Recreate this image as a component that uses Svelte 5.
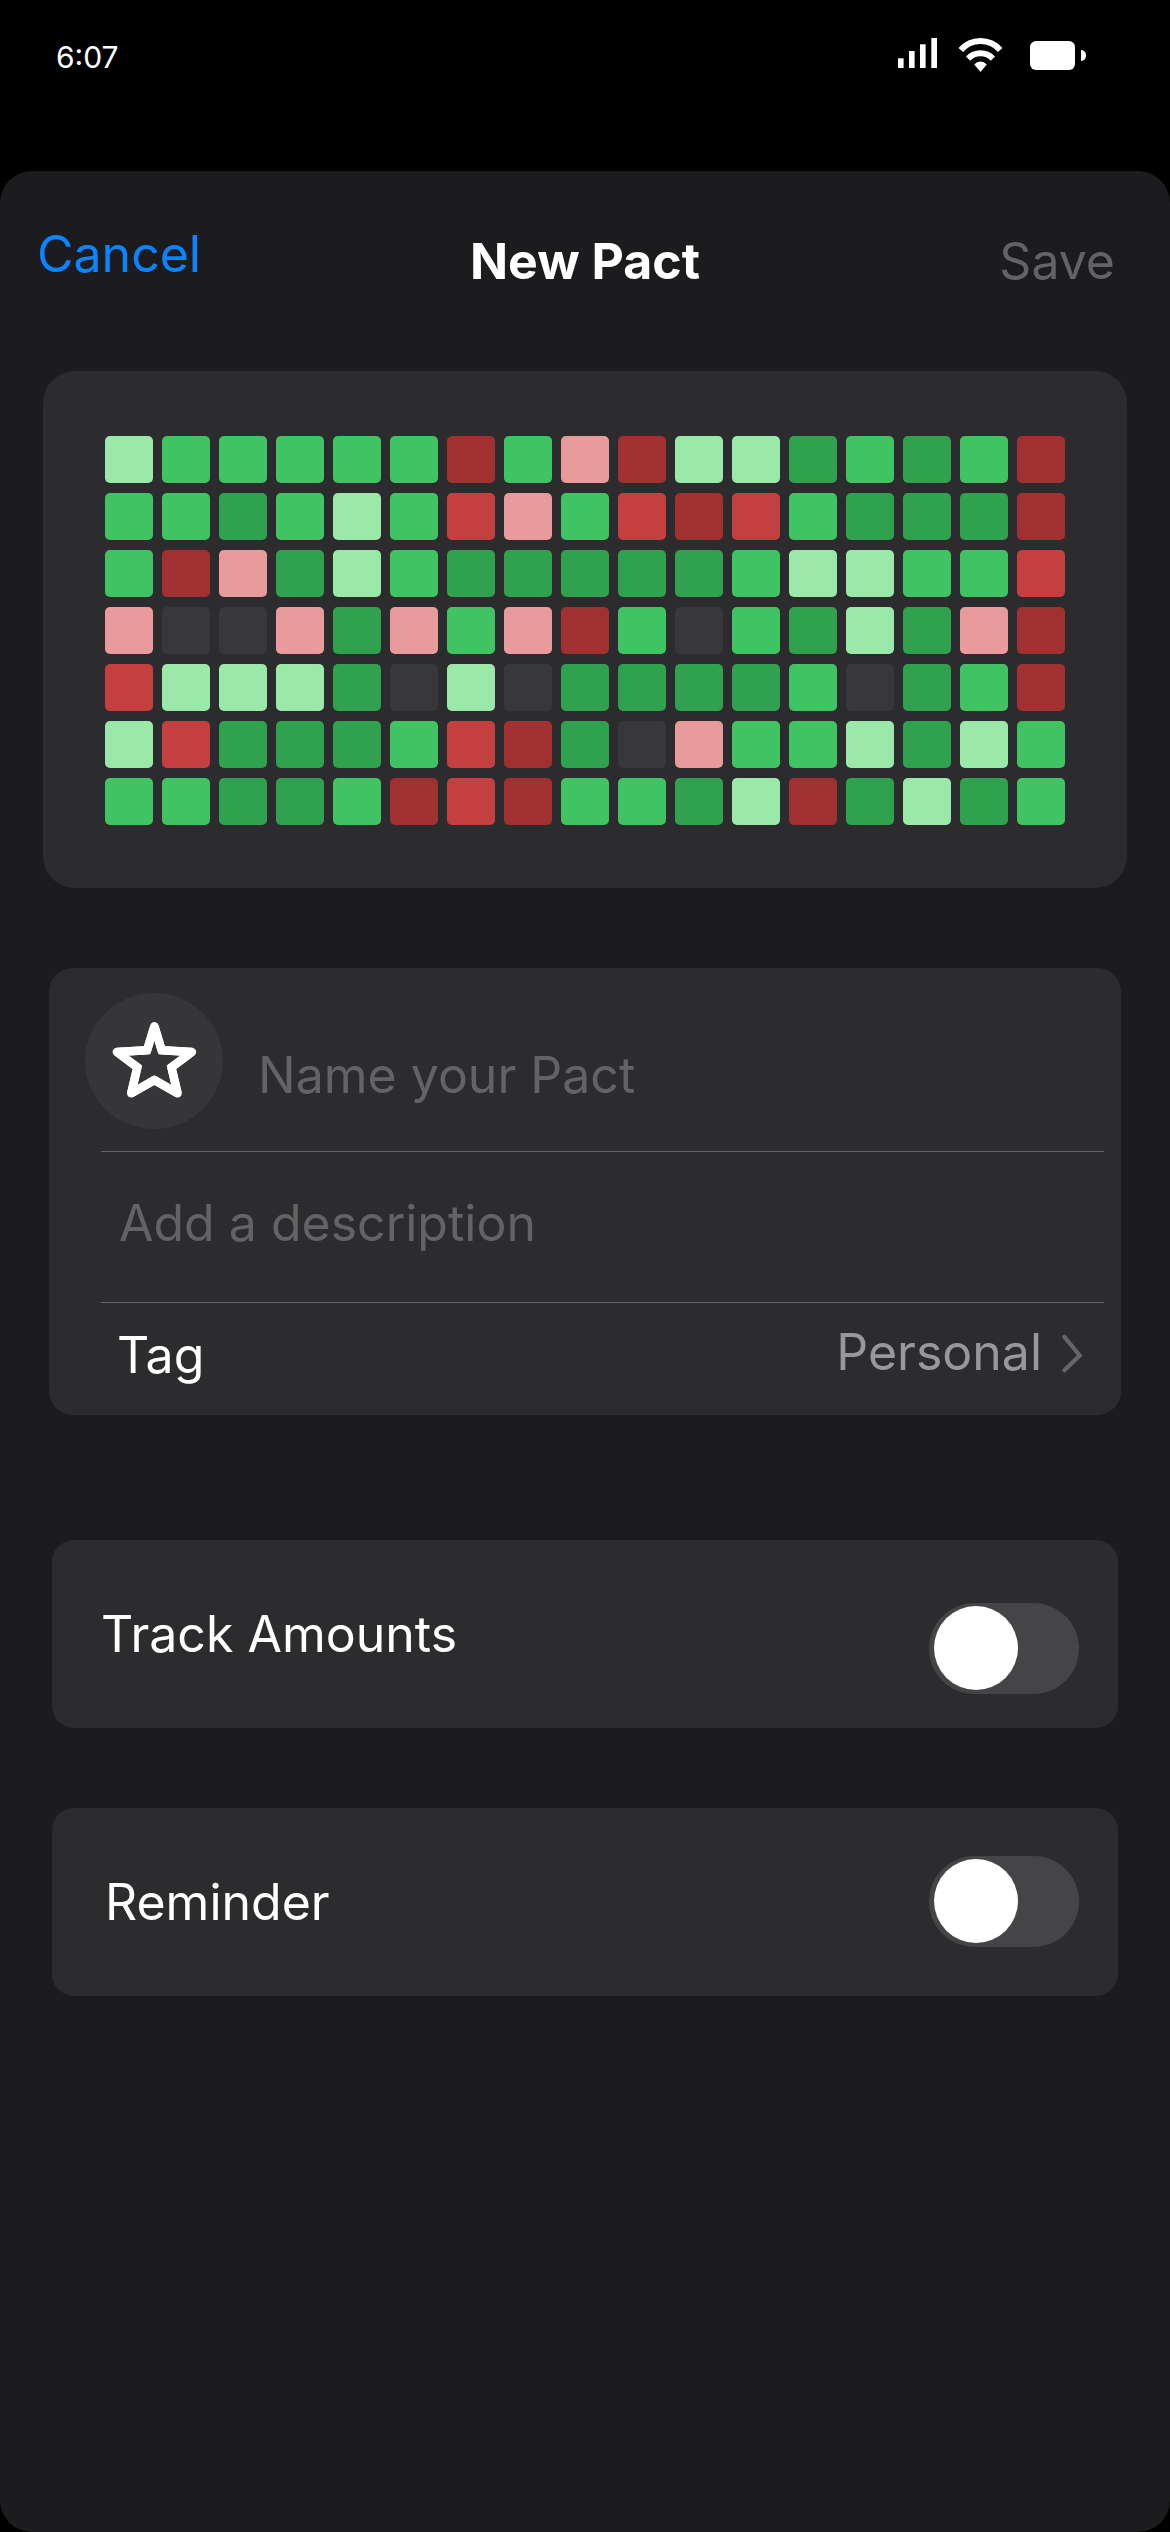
<script>
  // One character per day: a/b/c = light to dark green, p/r/d = pink, red, dark red, x = empty
  const rows = [
    'abbbbbdbpdaacbcbd',
    'bbcbabrpbrdrbcccd',
    'bdpcabcccccbaabbr',
    'pxxpcpbpdbxbcacpd',
    'raaacxaxccccbxcbd',
    'arcccbrdcxpbbacab',
    'bbccbdrdbbcadcacb'
  ];
  const cells = rows.join('').split('');

  const star =
    'M43.4 5.2L50.7 29.2L81 31L60.4 46.3L66.6 72.3L43.4 59L20.2 72.3L26.4 46.3L5.8 31L36.1 29.2Z';
</script>

<div class="screen">
  <div class="status">
    <span class="time">6:07</span>
    <svg class="signal" width="39" height="30" viewBox="0 0 39 30" fill="#fff">
      <rect x="0" y="20.3" width="5.6" height="9.7" />
      <rect x="11" y="13" width="5.6" height="17" />
      <rect x="22" y="6.3" width="5.6" height="23.7" />
      <rect x="33.3" y="0" width="5.7" height="30" />
    </svg>
    <svg class="wifi" width="46" height="36" viewBox="0 0 46 36" fill="none" stroke="#fff" stroke-width="6">
      <path d="M2.8 13A26 26 0 0 1 42.2 13" />
      <path d="M10.1 21.6A17 17 0 0 1 34.9 21.6" />
      <path d="M16.2 27.4A8.5 8.5 0 0 1 28.8 27.4L22.5 35Z" fill="#fff" stroke="none" />
    </svg>
    <div class="battery"></div>
    <div class="battery-tip"></div>
  </div>

  <main class="sheet">
    <header>
      <span class="cancel">Cancel</span>
      <h1>New Pact</h1>
      <span class="save">Save</span>
    </header>

    <section class="history">
      {#each cells as c}
        <i class="cell {c}"></i>
      {/each}
    </section>

    <section class="details">
      <div class="name-row">
        <div class="badge">
          <!-- Two passes: mitred inner corners, then rounded tips -->
          <svg width="86" height="80" viewBox="0 0 86 80" fill="none" stroke="#fff" stroke-width="8.4">
            <path d={star} stroke-linejoin="miter" stroke-miterlimit="1.5" />
            <path d={star} stroke-linejoin="round" />
          </svg>
        </div>
        <span class="hint name">Name your Pact</span>
      </div>
      <div class="desc-row"><span class="hint desc">Add a description</span></div>
      <div class="tag-row">
        <span class="tag">Tag</span>
        <span class="value">Personal</span>
        <svg class="chevron" width="22" height="40" viewBox="0 0 22 40" fill="none" stroke="#666668" stroke-width="4.2" stroke-linecap="round">
          <path d="M2.4 2.8L17.7 21.5L2.4 36.2" />
        </svg>
      </div>
    </section>

    <section class="option track">
      <span class="label">Track Amounts</span>
      <div class="toggle"><div class="knob"></div></div>
    </section>

    <section class="option reminder">
      <span class="label">Reminder</span>
      <div class="toggle"><div class="knob"></div></div>
    </section>
  </main>
</div>

<style>
  :global(body) {
    margin: 0;
    background: #000;
  }
  .screen {
    width: 1170px;
    height: 2532px;
    overflow: hidden;
    display: flex;
    flex-direction: column;
    background: #000;
    color: #fff;
    font-family: Inter, 'Liberation Sans', sans-serif;
    font-size: 50px;
    line-height: 60px;
    white-space: nowrap;
  }
  .status {
    height: 171px;
    flex: none;
    display: flex;
    align-items: flex-start;
    padding-left: 56px;
    box-sizing: border-box;
  }
  .time {
    font-size: 30px;
    line-height: 40px;
    margin-top: 37px;
    width: 842px;
  }
  .signal { margin-top: 38px; }
  .wifi { margin: 37px 0 0 21px; }
  .battery {
    width: 45px;
    height: 29px;
    margin: 41px 0 0 26px;
    border-radius: 6px;
    background: #fff;
  }
  .battery-tip {
    width: 5px;
    height: 11px;
    margin: 50px 0 0 6px;
    border-radius: 0 5px 5px 0;
    background: #fff;
  }
  .sheet {
    flex: 1;
    display: flex;
    flex-direction: column;
    background: #1c1c1e;
    border-radius: 32px;
  }
  header {
    height: 200px;
    flex: none;
    display: grid;
    grid-template-columns: 1fr auto 1fr;
    align-items: start;
  }
  h1 {
    margin: 60px 0 0;
    font-size: 50px;
    font-weight: 700;
    line-height: 60px;
  }
  .cancel { color: #0a84ff; margin: 53px 0 0 37px; }
  .save { color: #636365; margin: 60px 55px 0 0; text-align: right; }
  .history {
    margin: 0 43px;
    height: 517px;
    flex: none;
    box-sizing: border-box;
    padding: 65px 0 0 62px;
    display: grid;
    grid-template-columns: repeat(17, 48px);
    grid-auto-rows: 47px;
    gap: 10px 9px;
    align-content: start;
    background: #2c2c2e;
    border-radius: 32px;
  }
  .cell { border-radius: 5px; }
  .a { background: #9be9a8; }
  .b { background: #40c463; }
  .c { background: #30a14e; }
  .p { background: #e99b9b; }
  .r { background: #c44040; }
  .d { background: #a13030; }
  .x { background: #38383a; }
  .details {
    margin: 80px 49px 0;
    height: 447px;
    flex: none;
    background: #2c2c2e;
    border-radius: 24px;
  }
  .name-row, .desc-row, .tag-row {
    display: flex;
    align-items: flex-start;
    box-sizing: border-box;
  }
  .name-row, .desc-row {
    margin: 0 17px 0 52px;
    border-bottom: 1px solid #666668;
  }
  .name-row { height: 184px; }
  .badge {
    width: 138px;
    height: 136px;
    margin: 25px 0 0 -16px;
    border-radius: 50%;
    background: #363638;
    display: flex;
    align-items: center;
    justify-content: center;
  }
  .hint { color: #636365; }
  .name { margin: 77px 0 0 35px; }
  .desc-row { height: 151px; }
  .desc { margin: 41px 0 0 18px; }
  .tag-row { padding: 0 37px 0 68px; }
  .tag { margin-top: 22px; flex: 1; }
  .value { color: #98989b; margin-top: 19px; }
  .chevron { margin: 31px 0 0 20px; }
  .option {
    margin: 0 52px;
    height: 188px;
    flex: none;
    display: flex;
    justify-content: space-between;
    align-items: flex-start;
    box-sizing: border-box;
    padding-right: 39px;
    background: #2c2c2e;
    border-radius: 22px;
  }
  .track { margin-top: 125px; padding-left: 49px; }
  .reminder { margin-top: 80px; padding-left: 53px; }
  .label { margin-top: 64px; }
  .toggle {
    width: 150px;
    height: 91px;
    box-sizing: border-box;
    padding: 3px 5px;
    border-radius: 46px;
    background: #454547;
  }
  .track .toggle { margin-top: 63px; }
  .reminder .toggle { margin-top: 48px; }
  .knob {
    width: 84px;
    height: 84px;
    border-radius: 50%;
    background: #fff;
  }
</style>
